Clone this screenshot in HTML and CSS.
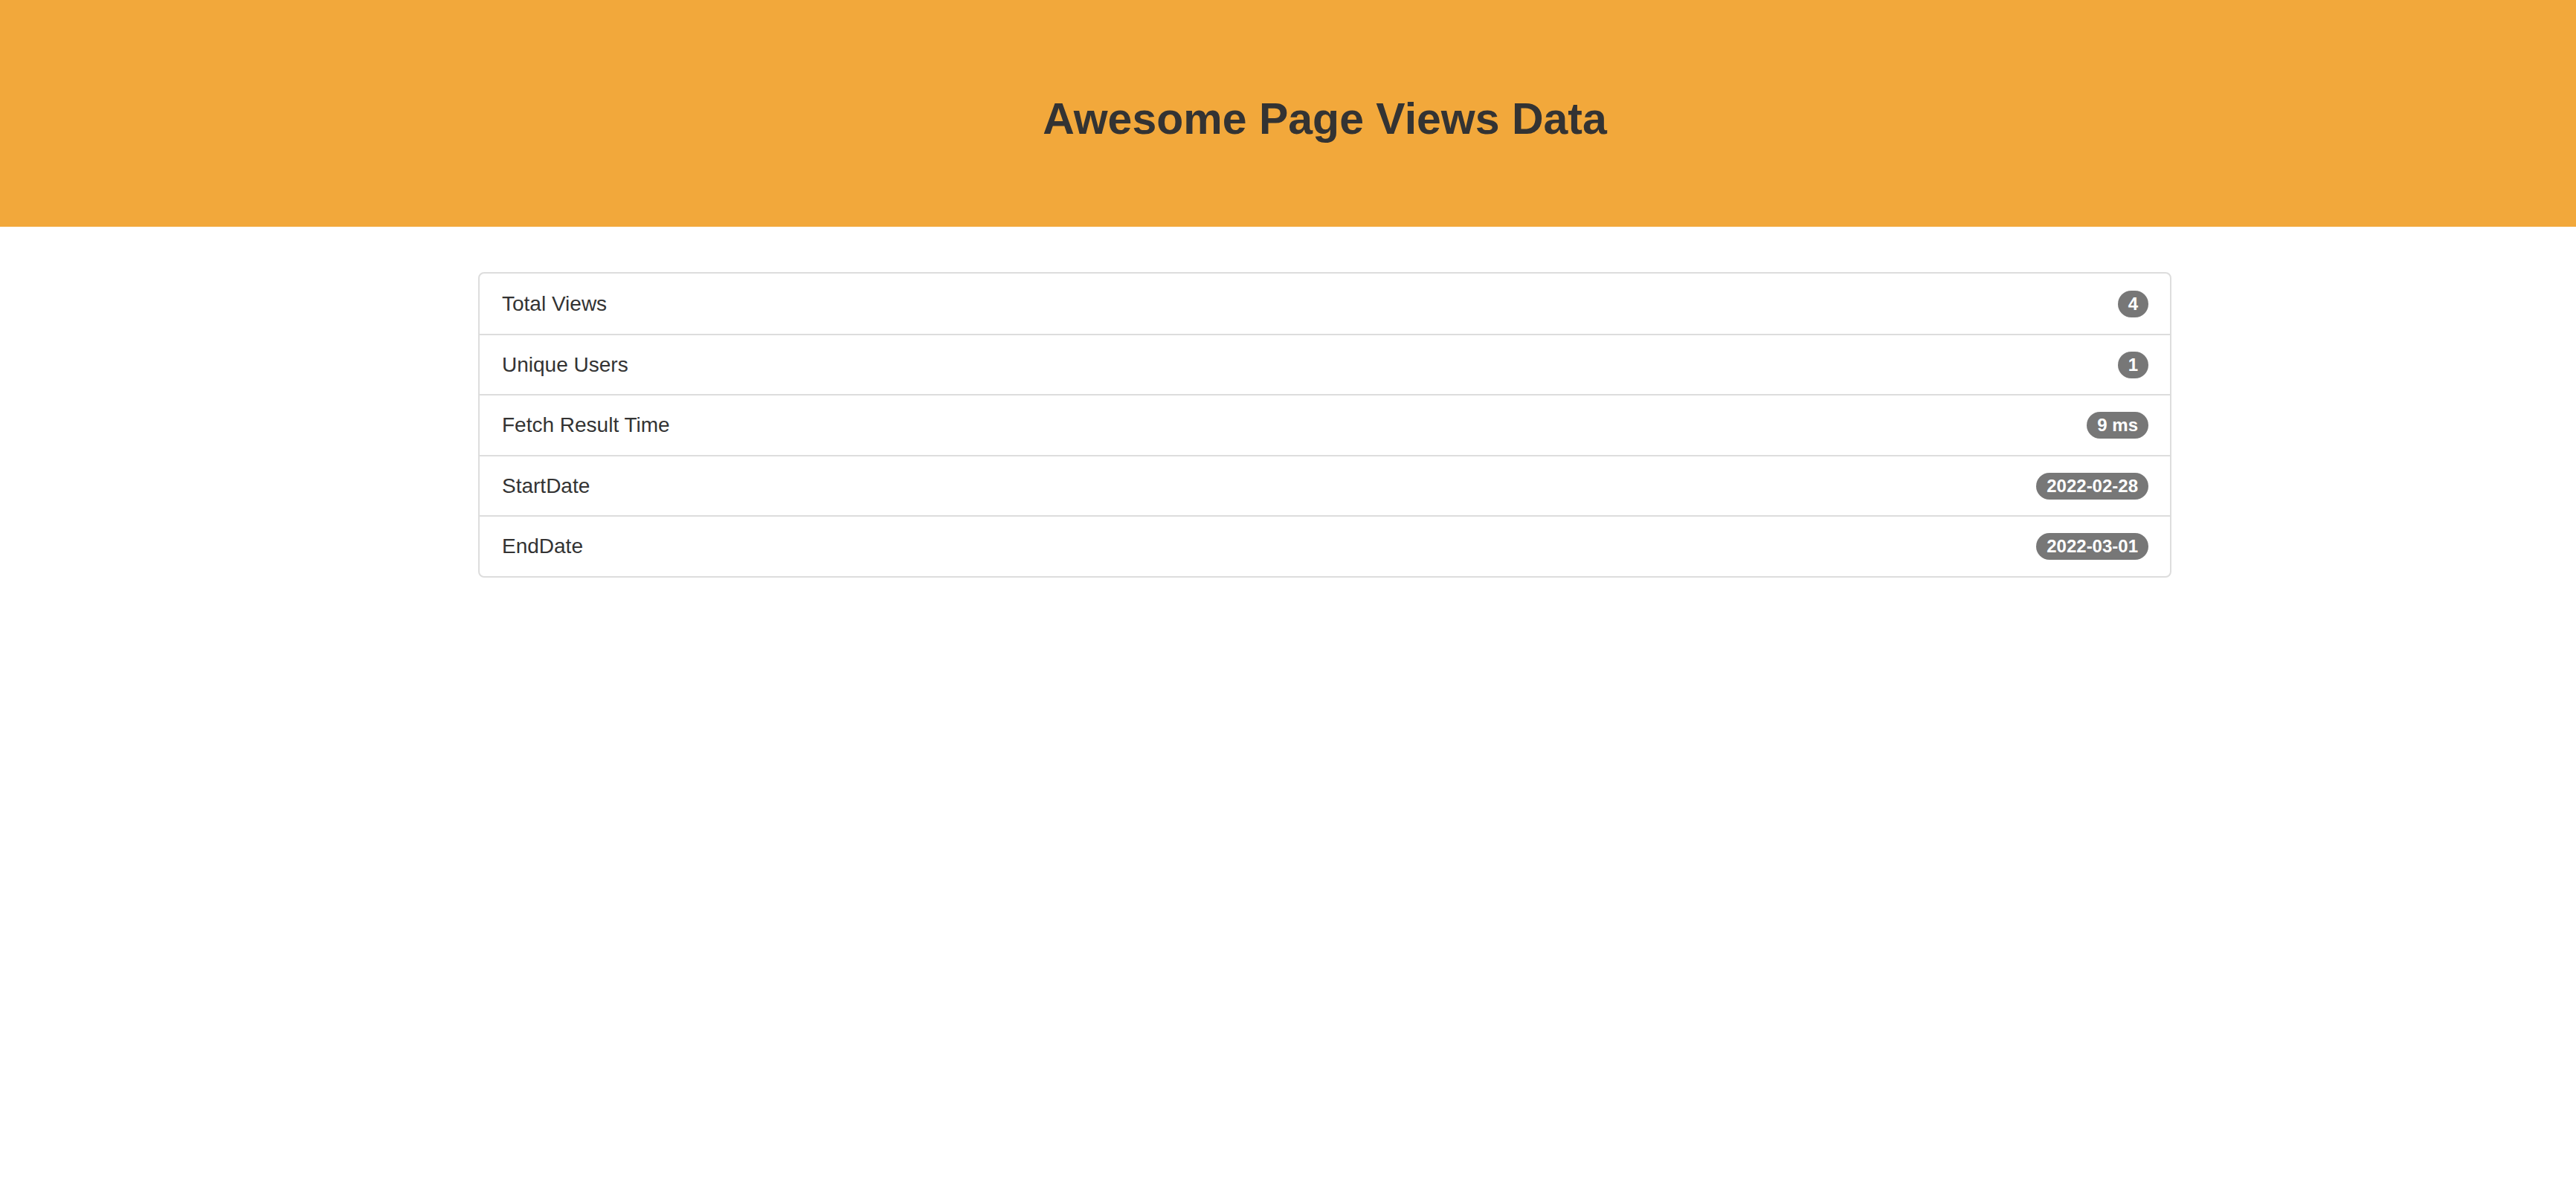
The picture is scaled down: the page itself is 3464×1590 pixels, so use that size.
FILE: index.html
```html
<!DOCTYPE html>
<html lang="en">
<head>
<meta charset="utf-8">
<title>Awesome Page Views Data</title>
<link rel="stylesheet" href="styles.css">
</head>
<body>
<div class="page">
  <header class="hero">
    <h1 class="hero-title">Awesome Page Views Data</h1>
  </header>
  <main class="container">
    <ul class="stats">
      <li class="stat"><span class="stat-label">Total Views</span><span class="badge">4</span></li>
      <li class="stat"><span class="stat-label">Unique Users</span><span class="badge">1</span></li>
      <li class="stat"><span class="stat-label">Fetch Result Time</span><span class="badge">9 ms</span></li>
      <li class="stat"><span class="stat-label">StartDate</span><span class="badge">2022-02-28</span></li>
      <li class="stat"><span class="stat-label">EndDate</span><span class="badge">2022-03-01</span></li>
    </ul>
  </main>
</div>
</body>
</html>
```

FILE: styles.css
```css
html, body {
  margin: 0;
  padding: 0;
  background: #ffffff;
}

body {
  font-family: "Liberation Sans", Arial, Helvetica, sans-serif;
  color: #333333;
}

.page {
  padding-left: 99px;
}

.hero {
  margin-left: -99px;
  padding-left: 99px;
  background: #f2a83b;
  height: 305px;
  box-sizing: border-box;
  padding-top: 127px;
}

.hero-title {
  margin: 0;
  text-align: center;
  font-size: 59px;
  line-height: 66px;
  font-weight: 700;
  color: #333333;
}

.container {
  width: 2277px;
  margin: 61px auto 0;
}

.stats {
  list-style: none;
  margin: 0;
  padding: 0;
  border: 2px solid #dddddd;
  border-radius: 8px;
}

.stat {
  display: flex;
  align-items: center;
  justify-content: space-between;
  padding: 20px 29px 19.5px 30px;
  line-height: 40px;
  font-size: 28px;
  color: #333333;
  border-top: 2px solid #dddddd;
}

.stat:first-child {
  border-top: none;
  padding-top: 21px;
}

.badge {
  display: inline-block;
  box-sizing: border-box;
  min-width: 20px;
  padding: 6px 14px;
  font-size: 24px;
  font-weight: 700;
  line-height: 1;
  color: #ffffff;
  text-align: center;
  white-space: nowrap;
  background: #777777;
  border-radius: 20px;
}
```
